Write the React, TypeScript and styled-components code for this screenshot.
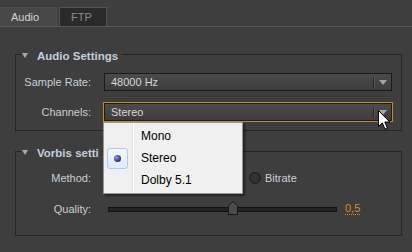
import styled, { createGlobalStyle } from 'styled-components';

const GlobalStyle = createGlobalStyle`
  html, body {
    margin: 0;
    padding: 0;
    background: #3e3e3e;
  }
`;

const channelOptions = ['Mono', 'Stereo', 'Dolby 5.1'];
const quality = { value: 0.5, min: -0.1, max: 1.0 };

function App() {
  const qualityPct = ((quality.value - quality.min) / (quality.max - quality.min)) * 100;

  return (
    <Frame>
      <GlobalStyle />
      {/* Tabs */}
      <TabBar>
        <Tab $active>Audio</Tab>
        <Tab>FTP</Tab>
      </TabBar>

      <Content>
        {/* Audio Settings */}
        <Group $top={20}>
          <Legend>
            <LegendInner>
              <Caret />
              Audio Settings
            </LegendInner>
          </Legend>
          <GroupBody $padTop={12} $padBottom={9} $rowGap={12}>
            <Label>Sample Rate:</Label>
            <Select>
              <SelectValue>48000 Hz</SelectValue>
              <SelectDivider />
              <SelectArrowBox>
                <SelectArrow />
              </SelectArrowBox>
            </Select>

            <Label>Channels:</Label>
            <Select $focused>
              <SelectValue>Stereo</SelectValue>
              <SelectDivider />
              <SelectArrowBox>
                <SelectArrow />
              </SelectArrowBox>
              <Menu>
                {channelOptions.map((opt) => (
                  <MenuItem key={opt}>
                    <Gutter>
                      {opt === 'Stereo' && (
                        <CheckBox>
                          <Bullet />
                        </CheckBox>
                      )}
                    </Gutter>
                    <MenuText>{opt}</MenuText>
                  </MenuItem>
                ))}
              </Menu>
            </Select>
          </GroupBody>
        </Group>

        {/* Vorbis settings */}
        <Group $top={13}>
          <Legend>
            <LegendInner>
              <Caret />
              Vorbis setti
            </LegendInner>
          </Legend>
          <GroupBody $padTop={11} $padBottom={17} $rowGap={13}>
            <Label>Method:</Label>
            {/* the first option sits under the open menu */}
            <RadioGroup $indent={145}>
              <RadioOption>
                <RadioCircle />
                Bitrate
              </RadioOption>
            </RadioGroup>

            <Label>Quality:</Label>
            <SliderRow>
              <Track>
                <Thumb style={{ left: `${qualityPct}%` }} width="10" height="14" viewBox="0 0 10 14">
                  <path d="M0.5 5 L5 0.8 L9.5 5 L9.5 13.5 L0.5 13.5 Z" fill="#4b4b4b" stroke="#151515" />
                  <path d="M1.8 5.4 L5 2.4 L8.2 5.4" fill="none" stroke="#5e5e5e" />
                </Thumb>
              </Track>
              <SliderValue>0,5</SliderValue>
            </SliderRow>
          </GroupBody>
        </Group>
      </Content>

      {/* Mouse pointer */}
      <Cursor width="13" height="21" viewBox="0 0 13 21">
        <path
          d="M0.5 0.5 L0.5 16.5 L4.3 12.8 L7 19.2 L9.4 18.2 L6.8 12 L11.8 12 Z"
          fill="#ffffff"
          stroke="#000000"
          strokeLinejoin="miter"
        />
      </Cursor>
    </Frame>
  );
}

const Frame = styled.div`
  position: relative;
  width: 412px;
  height: 252px;
  overflow: hidden;
  background: #3e3e3e;
  font-family: 'Liberation Sans', Arial, sans-serif;
  font-size: 11px;
  color: #c8ced6;
`;

/* Tabs */

const TabBar = styled.div`
  display: flex;
  align-items: flex-end;
  height: 19px;
  padding-top: 7px;
  border-bottom: 1px solid #565656;
`;

const Tab = styled.div<{ $active?: boolean }>`
  box-sizing: border-box;
  display: flex;
  align-items: center;
  height: 19px;
  padding-left: 11px;
  width: ${({ $active }) => ($active ? '57px' : '48px')};
  margin-left: ${({ $active }) => ($active ? '0' : '2px')};
  font-size: 11px;
  color: ${({ $active }) => ($active ? '#d4d4d4' : '#8a8a8a')};
  background: ${({ $active }) => ($active ? '#474747' : '#2a2a2a')};
  border: 1px solid ${({ $active }) => ($active ? '#4e4e4e' : '#525252')};
  border-bottom: none;
  border-left: ${({ $active }) => ($active ? 'none' : '1px solid #525252')};
`;

/* Groups */

const Content = styled.div`
  padding: 0 10px 0 15px;
`;

const Group = styled.fieldset<{ $top: number }>`
  margin: ${({ $top }) => $top}px 0 0;
  padding: 0;
  min-width: 0;
  border: 1px solid #262626;
`;

const Legend = styled.legend`
  margin-left: 5px;
  padding: 0 3px 0 1px;
  height: 14px;
  line-height: 14px;
`;

const LegendInner = styled.span`
  display: inline-flex;
  align-items: center;
  gap: 9px;
  font-size: 11.5px;
  font-weight: 700;
  color: #c2cedc;
`;

const Caret = styled.span`
  width: 0;
  height: 0;
  border-left: 3.5px solid transparent;
  border-right: 3.5px solid transparent;
  border-top: 5px solid #a9a9a9;
`;

const GroupBody = styled.div<{ $padTop: number; $padBottom: number; $rowGap: number }>`
  display: grid;
  grid-template-columns: 75px 288px;
  column-gap: 13px;
  row-gap: ${({ $rowGap }) => $rowGap}px;
  padding: ${({ $padTop, $padBottom }) => `${$padTop}px 9px ${$padBottom}px 0`};
`;

const Label = styled.div`
  height: 18px;
  line-height: 18px;
  text-align: right;
  font-size: 11px;
  color: #c8ced6;
`;

/* Select */

const Select = styled.div<{ $focused?: boolean }>`
  position: relative;
  box-sizing: border-box;
  display: flex;
  align-items: center;
  height: 18px;
  padding-left: 6px;
  border: 1px solid #1b1b1b;
  background: linear-gradient(#4b4b4b, #3d3d3d);
  box-shadow: ${({ $focused }) => ($focused ? '0 0 0 1px #c48e13' : 'none')};
  font-size: 11px;
  color: #d6d6d6;
`;

const SelectValue = styled.div`
  flex: 1;
`;

const SelectDivider = styled.div`
  width: 1px;
  height: 11px;
  background: #262626;
  box-shadow: 1px 0 0 #565656;
`;

const SelectArrowBox = styled.div`
  display: flex;
  align-items: center;
  justify-content: center;
  width: 17px;
  height: 100%;
`;

const SelectArrow = styled.div`
  width: 0;
  height: 0;
  border-left: 4px solid transparent;
  border-right: 4px solid transparent;
  border-top: 5px solid #a4a4a4;
`;

/* Dropdown menu */

const Menu = styled.div`
  position: absolute;
  top: 18px;
  left: -2px;
  z-index: 5;
  box-sizing: border-box;
  width: 140px;
  height: 72px;
  padding: 2px;
  background: linear-gradient(
      to right,
      transparent 28px,
      #e2e2e2 28px,
      #e2e2e2 29px,
      #ffffff 29px,
      #ffffff 30px,
      transparent 30px
    ),
    #f0f0f0;
  border: 1px solid #979797;
  box-shadow: 2px 2px 2px rgba(0, 0, 0, 0.45);
`;

const MenuItem = styled.div`
  display: flex;
  align-items: center;
  height: 22px;
`;

const Gutter = styled.div`
  display: flex;
  align-items: center;
  width: 30px;
  height: 100%;
  padding-left: 1px;
  box-sizing: border-box;
`;

const CheckBox = styled.div`
  box-sizing: border-box;
  display: flex;
  align-items: center;
  justify-content: center;
  width: 21px;
  height: 21px;
  border: 1px solid #a9ccf3;
  border-radius: 3px;
  background: linear-gradient(#f3f8fe, #deeafa);
`;

const Bullet = styled.div`
  width: 7px;
  height: 7px;
  border-radius: 50%;
  background: radial-gradient(circle at 35% 35%, #9a9ad6, #2a2a78 70%, #1c1c5a);
`;

const MenuText = styled.div`
  padding-left: 5px;
  font-size: 12px;
  color: #000000;
`;

/* Radios */

const RadioGroup = styled.div<{ $indent: number }>`
  display: flex;
  align-items: center;
  padding-left: ${({ $indent }) => $indent}px;
`;

const RadioOption = styled.div`
  display: flex;
  align-items: center;
  gap: 4px;
  font-size: 11px;
  color: #c8ced6;
`;

const RadioCircle = styled.div`
  box-sizing: border-box;
  width: 12px;
  height: 12px;
  border-radius: 50%;
  border: 1px solid #1d1d1d;
  background: radial-gradient(circle at 50% 40%, #363636, #2c2c2c);
`;

/* Slider */

const SliderRow = styled.div`
  display: flex;
  align-items: center;
  height: 18px;
`;

const Track = styled.div`
  position: relative;
  box-sizing: border-box;
  width: 229px;
  height: 5px;
  margin-left: 4px;
  background: #242424;
  border: 1px solid #121212;
`;

const Thumb = styled.svg`
  position: absolute;
  top: -7px;
  margin-left: -5px;
`;

const SliderValue = styled.div`
  margin-left: 8px;
  line-height: 11px;
  font-size: 11px;
  color: #c8941e;
  border-bottom: 1px dotted #c8941e;
`;

/* Pointer */

const Cursor = styled.svg`
  position: absolute;
  left: 378px;
  top: 110px;
  z-index: 10;
`;

export default App;
